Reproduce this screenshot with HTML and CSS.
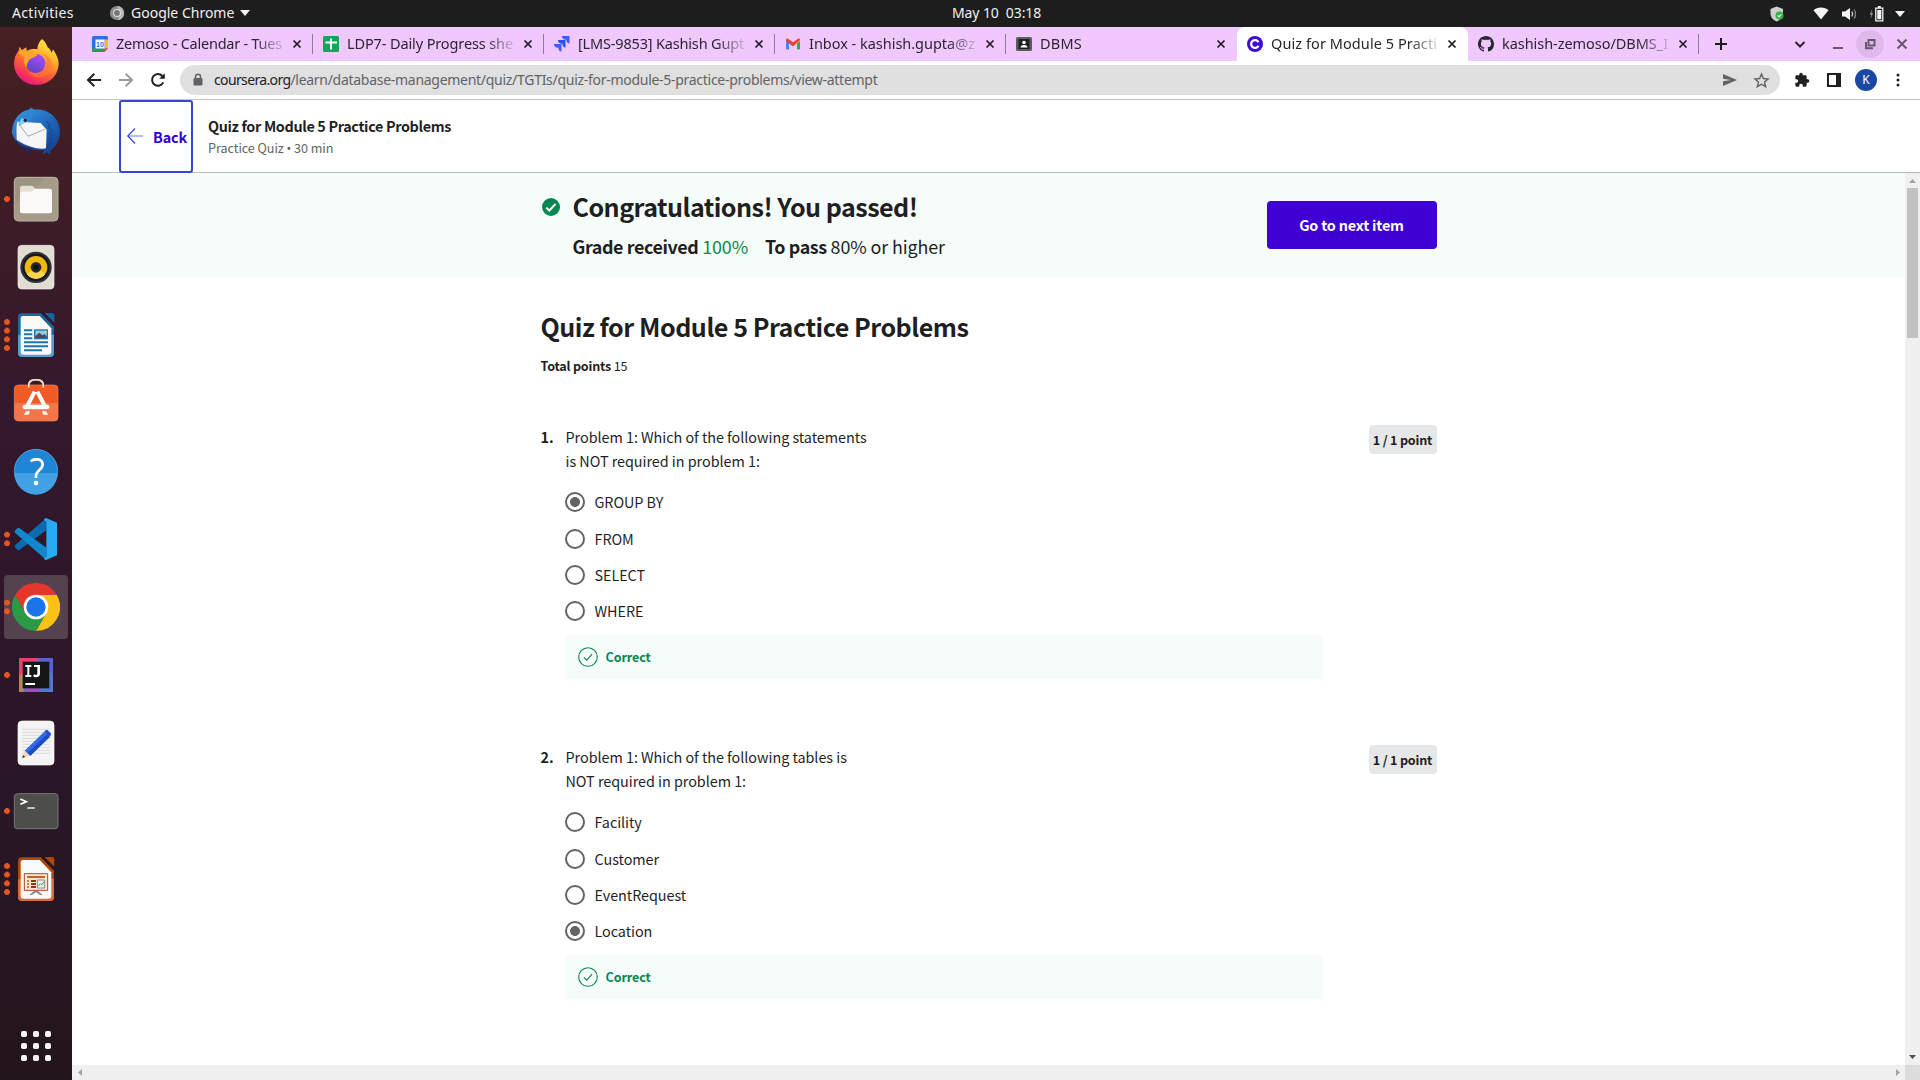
FILE: index.html
```html
<!DOCTYPE html>
<html lang="en">
<head>
<meta charset="utf-8">
<title>Quiz for Module 5 Practice Problems</title>
<link rel="stylesheet" href="styles.css">
</head>
<body>
<div class="desktop">
  <header class="topbar">
    <span class="activities">Activities</span>
    <span class="appmenu">
      <svg class="i18" viewBox="0 0 18 18"><circle cx="9" cy="9" r="8" fill="#8b8b8b"/><path d="M9 1a8 8 0 0 1 8 8c0 4-3 8-7 8l3-8z" fill="#b9b9b9"/><circle cx="9" cy="9" r="4.400" fill="#e4e4e4"/><circle cx="9" cy="9" r="3.300" fill="#777"/></svg>
      <span class="appname">Google Chrome</span>
      <svg class="caret" viewBox="0 0 10 6"><path d="M0 0h10L5 6z" fill="#f2f2f2"/></svg>
    </span>
    <span class="clock">May 10&nbsp; 03:18</span>
    <span class="status">
      <svg class="shield" viewBox="0 0 16 16"><path d="M7.500 0.500L14 3v4.500c0 4-3 6.500-6.500 8C4 14 1.500 11 1.500 7.500V3z" fill="#cfcfcf"/><circle cx="10.500" cy="9.500" r="4" fill="#2fb344"/><path d="M8.600 9.500l1.400 1.400 2.400-2.600" fill="none" stroke="#fff" stroke-width="1.100"/></svg>
      <svg class="wifi" viewBox="0 0 16 13"><path d="M0.500 3.200C2.500 1.300 5 .5 8 .5s5.500.8 7.500 2.700L8 12.500z" fill="#f5f5f5"/></svg>
      <svg class="vol" viewBox="0 0 16 14"><path d="M0 4.500h3L8 1v12L3 9.500H0z" fill="#f5f5f5"/><path d="M9.800 4.500q1.600 2.500 0 5" fill="none" stroke="#ddd" stroke-width="1.300"/><path d="M12 2.500q3 4.500 0 9" fill="none" stroke="#8a8a8a" stroke-width="1.300"/></svg>
      <svg class="bat" viewBox="0 0 15 16"><path d="M3 3.500L.8 8.500h1.700L1.500 13 4 7.200H2.400z" fill="#a8a8a8"/><path d="M6.800 2.200h7v12.600h-7z" fill="none" stroke="#f5f5f5" stroke-width="1.300"/><path d="M8.800 0h3v2h-3zM8.300 4h4v9.300h-4z" fill="#f5f5f5"/></svg>
      <svg class="caret" viewBox="0 0 10 6"><path d="M0 0h10L5 6z" fill="#f2f2f2"/></svg>
    </span>
  </header>

  <div class="workspace">
    <nav class="dock">
      <div class="app"><svg viewBox="0 3 144 144"><defs><linearGradient id="ff" x1=".8" y1="0" x2=".3" y2="1"><stop offset="0" stop-color="#fff14a"/><stop offset=".35" stop-color="#ffb02e"/><stop offset=".65" stop-color="#ff5a36"/><stop offset="1" stop-color="#ec1280"/></linearGradient><linearGradient id="fp" x1=".8" y1="0" x2=".3" y2="1"><stop offset="0" stop-color="#b34bf5"/><stop offset="1" stop-color="#5a45c8"/></linearGradient></defs><path d="M90 3c8 6 14 16 17 25 6 4 9 9 12 16l4-10c12 18 17 32 17 42 0 37-30 65-67 65S6 112 6 76c0-16 6-28 14-38l2-12 8 10 13-8 1 10c14-6 24-8 32-4 0-12 6-24 14-31z" fill="url(#ff)"/><circle cx="71" cy="76" r="29" fill="url(#fp)"/><path d="M20 40c10-4 20-2 29 6 10-4 20-4 27 4-4 8-16 8-23 14-6 8-10 14-8 24-10-8-12-22-6-31-10-2-16-8-19-17z" fill="#ffa42c"/><path d="M44 92c10 18 46 18 58-6 6-12 2-30-10-38 22 4 34 28 24 50-12 26-58 30-72-6z" fill="#ff7a33" opacity=".65"/></svg></div>
      <div class="app"><svg viewBox="0 0 144 144"><defs><linearGradient id="tb" x1="0" y1="0" x2=".8" y2="1"><stop offset="0" stop-color="#3aa0e4"/><stop offset=".6" stop-color="#1d63b8"/><stop offset="1" stop-color="#17408f"/></linearGradient></defs><path d="M56 2l14 6c40-4 74 28 74 66 0 24-12 44-28 56l-2 12-10-6-12 6 4-12C50 128 14 124 0 78 0 40 22 12 50 8z" fill="url(#tb)"/><path d="M16 44l70 4 18 20-2 56c-24 6-70-12-88-26 0-20-2-38 2-54z" fill="#f6f6f8"/><path d="M20 50l28 38 52-22" fill="none" stroke="#a9a9b2" stroke-width="3"/><path d="M22 58C18 26 42 6 70 10 54 22 64 32 50 42c-8 6-18 4-28 16z" fill="#2f86d2"/><path d="M22 58c0-12 2-20 8-25 6 4 12 8 18 10-10 4-18 6-26 15z" fill="#88c9f2"/><circle cx="40" cy="40" r="5" fill="#1b2340"/><path d="M104 42l10 14-4 6 10 8-8 8 10 4-10 12 8 2-12 18 14-4" fill="none" stroke="#123c86" stroke-width="4" opacity=".5"/><path d="M10 96c14 16 34 22 54 28l-6 18C34 136 14 120 10 96z" fill="#2a2358" opacity=".7"/></svg></div>
      <div class="app"><i class="run n1"></i><svg viewBox="0 0 144 144"><rect x="7" y="7" width="131" height="131" rx="12" fill="#9c9480" stroke="#c3bca9" stroke-width="3"/><path d="M8 90L100 8h28q10 0 10 10v108q0 12-12 12H20q-12 0-12-12z" fill="#aba48f" opacity=".5"/><path d="M24 40q0-8 8-8h26q4 0 7 4l5 6v20H24z" fill="#e3dfd2"/><path d="M24 58q0-8 8-8h26l6-5q3-4 8-4h40q8 0 8 8v58q0 8-8 8H32q-8 0-8-8z" fill="#faf9f7"/></svg></div>
      <div class="app"><svg viewBox="0 0 144 144"><rect x="18" y="7" width="108" height="131" rx="11" fill="#e1ddd2" stroke="#f3f1ea" stroke-width="2"/><circle cx="72" cy="73" r="47" fill="#2e3139"/><circle cx="72" cy="73" r="41" fill="#16181d"/><circle cx="72" cy="73" r="34" fill="#efb90e"/><path d="M44 93a34 34 0 0 0 56 0L72 73z" fill="#f8d64f"/><circle cx="72" cy="73" r="16" fill="#26282a"/><circle cx="72" cy="73" r="8" fill="#0f1011"/></svg></div>
      <div class="app"><i class="run n4"></i><svg viewBox="0 0 144 144"><path d="M29 7h57l40 40v79q0 12-12 12H30q-12 0-12-12V18q0-11 11-11z" fill="#176aa5"/><path d="M18 72h108v54q0 12-12 12H30q-12 0-12-12z" fill="#4f9fcf"/><path d="M33 15h50l35 37v71q0 8-8 8H34q-8 0-8-8V23q0-8 7-8z" fill="#fafafa"/><path d="M98 6h22q7 0 7 7v22z" fill="#12679f"/><path d="M36 55h25v6H36zM36 67h25v6H36zM36 79h25v6H36zM36 91h72v6H36zM36 103h72v6H36zM36 115h54v6H36z" fill="#1b74ad"/><path d="M66 55h42v30H66z" fill="#1b74ad"/><path d="M70 59h34v22H70z" fill="#8ccbec"/><path d="M70 81V75l12-10 9 8 6-4 7 7v5z" fill="#4a4c50"/><path d="M96 59h8v8z" fill="#f5cf32"/></svg></div>
      <div class="app"><svg viewBox="0 0 144 144"><path d="M50 30V20q0-18 22-18t22 18v10" fill="none" stroke="#eed9b8" stroke-width="5"/><rect x="7" y="18" width="131" height="108" rx="12" fill="#ee5b25" stroke="#f58d5f" stroke-width="2"/><path d="M8 72h130v42q0 12-12 12H20q-12 0-12-12z" fill="#f2764a"/><path d="M50 26V20q0-18 22-18t22 18v6" fill="none" stroke="#eed9b8" stroke-width="5"/><path d="M68 38L44 84M76 38l24 46" stroke="#fff" stroke-width="12"/><path d="M38 84h68" stroke="#fff" stroke-width="13" stroke-linecap="round"/><path d="M42 97l-6 10h14l4-10zM102 97l6 10H94l-4-10z" fill="#fff"/></svg></div>
      <div class="app"><svg viewBox="0 0 144 144"><circle cx="72" cy="72" r="65" fill="#1f85d6" stroke="#70bdf0" stroke-width="2"/><path d="M7 78a65 65 0 0 0 130 0z" fill="#42a0e4"/><path d="M56 43c8-8 34-10 36 8 1 18-20 18-20 36v6" fill="none" stroke="#fff" stroke-width="8"/><circle cx="72" cy="108" r="7" fill="#fff"/></svg></div>
      <div class="app"><i class="run n2"></i><svg viewBox="0 0 144 144"><path d="M102 10L103 46 23 104q-4 3-7 0l-6-6q-4-4 0-8z" fill="#0a6cae"/><path d="M102 134l1-36L23 40q-4-3-7 0l-6 6q-4 4 0 8z" fill="#1187cf"/><path d="M102 9l33 14v98l-33 14q-4 0-6-4l7-6V20l-7-6q2-4 6-5z" fill="#28aaf4"/></svg></div>
      <div class="app active"><i class="run n2"></i><svg viewBox="0 0 144 144"><path d="M9.600 36A72 72 0 0 1 134.400 36H72z" fill="#e4372c"/><path d="M134.400 36A72 72 0 0 1 72 144l31-54-31-54z" fill="#fbc116"/><path d="M72 144A72 72 0 0 1 9.600 36l31 54L103 90z" fill="#2b9a46"/><path d="M9.600 36l31 54L72 72V36z" fill="#e4372c"/><path d="M72 36h62.400L103 90z" fill="#fbc116"/><circle cx="72" cy="72" r="37" fill="#fff"/><circle cx="72" cy="72" r="29" fill="#1b74e8"/></svg></div>
      <div class="app"><i class="run n1"></i><svg viewBox="0 0 144 144"><path d="M21 21h102v102H21z" fill="#5277d6"/><path d="M21 21h60L40 72l-19 20z" fill="#f23c6e"/><path d="M76 21h47v50z" fill="#5a63cf"/><path d="M21 74l14-10v59H21z" fill="#b58459"/><path d="M40 123V108h50l-10 15z" fill="#9a52b8"/><path d="M32 32h80v80H32z" fill="#161616"/><path d="M40 42h18v6h-6v24h6v6H40v-6h6V48h-6zM66 42h18v25q0 12-12 12-5 0-9-4l4-5q9 5 9-3V48H66zM40 96h29v6H40z" fill="#fff"/></svg></div>
      <div class="app"><svg viewBox="0 0 144 144"><rect x="18" y="6" width="108" height="132" rx="12" fill="#f4f4f4" stroke="#fff" stroke-width="2"/><path d="M30 31h84M30 40h84M30 49h84M30 58h84M30 67h84M30 76h84M30 85h84M30 94h84M30 103h84" stroke="#cfcfcf" stroke-width="2"/><path d="M30 117l8-22 15 15z" fill="#f3d8b8"/><path d="M30 117l4-9 6 6z" fill="#3a3a3a"/><path d="M38 95l58-56 17 15-58 56z" fill="#2f6be4"/><path d="M47 102l58-56 8 8-58 56z" fill="#1d4bc0"/><path d="M96 39l5-5q3-3 6 0l9 9q3 3 0 6l-4 5z" fill="#2450cf"/></svg></div>
      <div class="app"><i class="run n1"></i><svg viewBox="0 0 144 144"><rect x="7" y="20" width="131" height="105" rx="9" fill="#4d4d4c" stroke="#777" stroke-width="3"/><path d="M25 36l18 8-18 8" fill="none" stroke="#fff" stroke-width="5"/><path d="M46 63h22" stroke="#fff" stroke-width="4"/></svg></div>
      <div class="app"><i class="run n4"></i><svg viewBox="0 0 144 144"><path d="M29 7h57l40 40v79q0 12-12 12H30q-12 0-12-12V18q0-11 11-11z" fill="#b1460b"/><path d="M18 72h108v54q0 12-12 12H30q-12 0-12-12z" fill="#dd6a31"/><path d="M33 15h50l35 37v71q0 8-8 8H34q-8 0-8-8V23q0-8 7-8z" fill="#fafafa"/><path d="M98 6h22q7 0 7 7v22z" fill="#ae4509"/><path d="M37 56h70v50H37z" fill="#fbe7d6" stroke="#a74c1c" stroke-width="3"/><path d="M45 63h54v6H45z" fill="#c7602a"/><path d="M45 75h6v6h-6zM45 84h6v6h-6zM45 93h6v6h-6z" fill="#dd7a43"/><path d="M57 75h15v6H57zM57 84h15v6H57zM57 93h15v6H57z" fill="#8e3a10"/><path d="M76 75h22v24H76z" fill="#f2f2f2" stroke="#8c8c8c" stroke-width="3"/><path d="M79 93l6-7 4 4 7-10" fill="none" stroke="#3aa640" stroke-width="3"/><path d="M66 108h12l14 12h-8l-12-8-12 8h-8z" fill="#8a8a8a"/></svg></div>
      <div class="app grid"><svg viewBox="0 0 144 144"><g fill="#f3f3f1"><rect x="27" y="27" width="18" height="18" rx="5"/><rect x="63" y="27" width="18" height="18" rx="5"/><rect x="99" y="27" width="18" height="18" rx="5"/><rect x="27" y="63" width="18" height="18" rx="5"/><rect x="63" y="63" width="18" height="18" rx="5"/><rect x="99" y="63" width="18" height="18" rx="5"/><rect x="27" y="99" width="18" height="18" rx="5"/><rect x="63" y="99" width="18" height="18" rx="5"/><rect x="99" y="99" width="18" height="18" rx="5"/></g></svg></div>
    </nav>

    <div class="browser">
      <div class="tabs">
        <div class="tab"><svg class="i16" viewBox="0 0 16 16"><path d="M0 1.500Q0 0 1.500 0H14.500Q16 0 16 1.500V12.500H12.500V16H1.500Q0 16 0 14.500z" fill="#2f6fe6"/><path d="M12.500 3.500H16v9h-3.500z" fill="#fbbc04"/><path d="M3 12.500h9.500V16H1.500Q0 16 0 14.500V12.500z" fill="#24a148"/><path d="M12.500 12.500H16L12.500 16z" fill="#e94335"/><path d="M3.500 3.500h9v9h-9z" fill="#fff"/><text x="8" y="10.800" class="cal-day">10</text></svg><span class="title t1">Zemoso - Calendar - Tues</span><svg class="x" viewBox="0 0 10 10"><path d="M1.500 1.500l7 7M8.500 1.500l-7 7"/></svg></div>
        <div class="tab"><svg class="i16" viewBox="0 0 16 16"><rect width="16" height="16" rx="1.500" fill="#12a65a"/><path d="M7 2.500h2V5.500h5v2H9V13.500H7V7.500H2.500v-2H7z" fill="#fff"/></svg><span class="title t2">LDP7- Daily Progress she</span><svg class="x" viewBox="0 0 10 10"><path d="M1.500 1.500l7 7M8.500 1.500l-7 7"/></svg></div>
        <div class="tab"><svg class="i16" viewBox="0 0 16 16"><path d="M8 0h7.500v7.500q-3 0-3.200-3.700Q8 3.800 8 0z" fill="#3d5cff"/><path d="M4 4h7.500v7.500q-3 0-3.200-3.700Q4 7.800 4 4z" fill="#2d50e6"/><path d="M0 8h7.500v7.500q-3 0-3.200-3.700Q0 11.800 0 8z" fill="#3d5cff"/></svg><span class="title t3">[LMS-9853] Kashish Gupt</span><svg class="x" viewBox="0 0 10 10"><path d="M1.500 1.500l7 7M8.500 1.500l-7 7"/></svg></div>
        <div class="tab"><svg class="i16" viewBox="0 0 16 16"><path d="M1 4.500l3 2V13.500H2q-1 0-1-1z" fill="#4285f4"/><path d="M12 6.500l3-2v8q0 1-1 1h-2z" fill="#34a853"/><path d="M12 4v3.500l3-2.200V4q0-1.800-1.800-1.300z" fill="#fbbc04"/><path d="M1 5.300V4Q1 2.200 3 2.700L8 6.300l5-3.600q2-.5 2 1.300L8 10.500z" fill="#ea4335"/></svg><span class="title t4">Inbox - kashish.gupta@z</span><svg class="x" viewBox="0 0 10 10"><path d="M1.500 1.500l7 7M8.500 1.500l-7 7"/></svg></div>
        <div class="tab nosep"><svg class="i16" viewBox="0 0 16 16"><rect y="1" width="16" height="14" rx="1.500" fill="#5b5d62"/><path d="M2.500 3h11v10h-11z" fill="#1f2023"/><circle cx="8" cy="6.500" r="1.800" fill="#fff"/><path d="M4.500 11.500q0-2.500 3.500-2.500t3.500 2.500z" fill="#fff"/></svg><span class="title t5">DBMS</span><svg class="x" viewBox="0 0 10 10"><path d="M1.500 1.500l7 7M8.500 1.500l-7 7"/></svg></div>
        <div class="tab current"><svg class="i16" viewBox="0 0 16 16"><circle cx="8" cy="8" r="8" fill="#3c0bd6"/><path d="M11.500 6.200A3.900 3.900 0 1 0 11.500 9.800" fill="none" stroke="#fff" stroke-width="2.300"/></svg><span class="title t6">Quiz for Module 5 Practi</span><svg class="x" viewBox="0 0 10 10"><path d="M1.500 1.500l7 7M8.500 1.500l-7 7"/></svg></div>
        <div class="tab"><svg class="i16" viewBox="0 0 16 16"><path fill="#24292f" d="M8 0C3.580 0 0 3.580 0 8c0 3.540 2.290 6.530 5.470 7.590.4.070.55-.17.55-.38 0-.19-.01-.82-.01-1.490-2.010.37-2.530-.49-2.690-.94-.09-.23-.48-.94-.82-1.130-.28-.15-.68-.52-.01-.53.63-.01 1.080.58 1.230.82.72 1.210 1.870.87 2.330.66.070-.52.280-.87.510-1.070-1.780-.2-3.640-.89-3.640-3.950 0-.87.31-1.590.82-2.150-.08-.2-.36-1.020.080-2.120 0 0 .67-.21 2.200.82.640-.18 1.320-.27 2-.27s1.360.090 2 .27c1.530-1.040 2.200-.82 2.200-.82.44 1.100.16 1.920.080 2.120.51.56.82 1.270.82 2.150 0 3.070-1.870 3.750-3.650 3.950.29.25.54.73.54 1.480 0 1.070-.01 1.930-.01 2.200 0 .21.15.46.55.38A8.010 8.010 0 0 0 16 8c0-4.420-3.580-8-8-8z"/></svg><span class="title t7">kashish-zemoso/DBMS_I</span><svg class="x" viewBox="0 0 10 10"><path d="M1.500 1.500l7 7M8.500 1.500l-7 7"/></svg></div>
        <svg class="newtab" viewBox="0 0 12 12"><path d="M6 0v12M0 6h12"/></svg>
        <div class="winctl">
          <svg class="search" viewBox="0 0 28 28"><path d="M9.500 12l4.500 4.500 4.500-4.500"/></svg>
          <svg viewBox="0 0 28 28"><path d="M9 18h10"/></svg>
          <svg viewBox="0 0 28 28"><circle cx="14" cy="14" r="14" class="hov"/><path d="M12.500 10h6v5.500h-6zM10 12v6.200h7"/></svg>
          <svg viewBox="0 0 28 28"><path d="M9.500 9.500l9 9M18.500 9.500l-9 9"/></svg>
        </div>
      </div>

      <div class="toolbar">
        <svg class="nav" viewBox="0 0 16 16"><path d="M15 8H2.200M8.300 1.700L2 8l6.300 6.300"/></svg>
        <svg class="nav dim" viewBox="0 0 16 16"><path d="M1 8h12.800M7.700 1.700L14 8l-6.300 6.300"/></svg>
        <svg class="nav" viewBox="0 0 16 16"><path d="M13.200 10.300a5.800 5.800 0 1 1-1-6.300l1.300 1.500"/><path d="M14.800 1.200v5.600H9.200z" class="solid"/></svg>
        <div class="omnibox">
          <svg class="lock" viewBox="0 0 10 14"><path d="M2.500 6V3.700a2.500 2.500 0 0 1 5 0V6" fill="none" stroke="#5f6368" stroke-width="1.500"/><rect x=".5" y="5" width="9" height="7.500" rx="1" fill="#5f6368"/></svg>
          <span class="url"><span class="host">coursera.org</span><span class="path">/learn/database-management/quiz/TGTIs/quiz-for-module-5-practice-problems/view-attempt</span></span>
          <svg class="send" viewBox="0 0 14 12"><path d="M0 0l14 6-14 6V7.300L8 6 0 4.700z" fill="#5f6368"/></svg>
          <svg class="star" viewBox="0 0 24 24"><path d="M12 3l2.700 6.200 6.700.6-5.100 4.400 1.600 6.600-5.900-3.500-5.900 3.500 1.600-6.600-5.100-4.400 6.700-.6z" fill="none" stroke="#5f6368" stroke-width="2"/></svg>
        </div>
        <svg class="puzzle" viewBox="0 0 24 24"><path fill="#202124" d="M20.500 11H19V7c0-1.100-.9-2-2-2h-4V3.500C13 2.120 11.880 1 10.500 1S8 2.120 8 3.500V5H4c-1.100 0-1.990.9-1.990 2v3.800H3.500c1.490 0 2.700 1.210 2.700 2.700s-1.210 2.700-2.700 2.700H2V20c0 1.100.9 2 2 2h3.800v-1.500c0-1.490 1.210-2.700 2.700-2.700s2.700 1.210 2.700 2.700V22H17c1.100 0 2-.9 2-2v-4h1.500c1.380 0 2.500-1.120 2.500-2.500S21.880 11 20.500 11z"/></svg>
        <svg class="panel" viewBox="0 0 14 14"><path d="M1 1h12v12H1z" fill="#fff" stroke="#202124" stroke-width="2"/><path d="M9 1h4v12H9z" fill="#202124"/></svg>
        <span class="avatar">K</span>
        <svg class="dots" viewBox="0 0 4 14"><circle cx="2" cy="2" r="1.500"/><circle cx="2" cy="7" r="1.500"/><circle cx="2" cy="12" r="1.500"/></svg>
      </div>

      <div class="pagehead">
        <a class="back"><svg viewBox="0 0 16 16"><path d="M8 .5L.8 8 8 15.500"/><path d="M1 8h15" opacity=".6"/></svg><span>Back</span></a>
        <div class="crumb"><span class="name">Quiz for Module 5 Practice Problems</span><span class="kind">Practice Quiz <span class="bullet">•</span> 30 min</span></div>
      </div>

      <div class="viewport">
        <main class="page">
          <section class="banner">
            <div class="column">
              <svg class="pass" viewBox="0 0 18 18"><circle cx="9" cy="9" r="9" fill="#078751"/><path d="M4.300 9.600l3 2.900 6.200-6.500" fill="none" stroke="#fff" stroke-width="2"/></svg>
              <div class="result">
                <h1>Congratulations! You passed!</h1>
                <p><b>Grade received</b> <span class="green">100%</span><b class="topass">To pass</b> <span>80% or higher</span></p>
              </div>
              <a class="next">Go to next item</a>
            </div>
          </section>
          <section class="quiz">
            <h2>Quiz for Module 5 Practice Problems</h2>
            <p class="total"><b>Total points</b> <span>15</span></p>

            <article class="question">
              <b class="num">1.</b>
              <div class="body">
                <p class="prompt">Problem 1: Which of the following statements is NOT required in problem 1:</p>
                <div class="option"><i class="radio on"></i>GROUP BY</div>
                <div class="option"><i class="radio"></i>FROM</div>
                <div class="option"><i class="radio"></i>SELECT</div>
                <div class="option"><i class="radio"></i>WHERE</div>
                <div class="feedback"><svg viewBox="0 0 20 20"><circle cx="10" cy="10" r="9.300"/><path d="M6 10.500l2.800 2.600 5.200-6"/></svg><span>Correct</span></div>
              </div>
              <span class="points">1 / 1 point</span>
            </article>

            <article class="question">
              <b class="num">2.</b>
              <div class="body">
                <p class="prompt">Problem 1: Which of the following tables is NOT required in problem 1:</p>
                <div class="option"><i class="radio"></i>Facility</div>
                <div class="option"><i class="radio"></i>Customer</div>
                <div class="option"><i class="radio"></i>EventRequest</div>
                <div class="option"><i class="radio on"></i>Location</div>
                <div class="feedback"><svg viewBox="0 0 20 20"><circle cx="10" cy="10" r="9.300"/><path d="M6 10.500l2.800 2.600 5.200-6"/></svg><span>Correct</span></div>
              </div>
              <span class="points">1 / 1 point</span>
            </article>
          </section>
        </main>
        <div class="vscroll"><svg viewBox="0 0 7 4"><path d="M0 4h7L3.500 0z"/></svg><i class="thumb"></i><svg class="end" viewBox="0 0 7 4"><path d="M0 0h7L3.500 4z"/></svg></div>
        <div class="hscroll"><svg viewBox="0 0 4 7"><path d="M4 0v7L0 3.500z"/></svg><svg viewBox="0 0 4 7"><path d="M0 0v7l4-3.500z"/></svg></div>
        <div class="corner"></div>
      </div>
    </div>
  </div>
</div>
</body>
</html>
```
FILE: styles.css
```css
* { box-sizing: border-box; }
body {
  margin: 0;
  overflow: hidden;
  font-family: "Noto Sans CJK SC", "Noto Sans", sans-serif;
  color: #1f1f1f;
}
svg { display: block; flex: none; }
p, h1, h2 { margin: 0; }
i { font-style: normal; }

.desktop { width: 1920px; height: 1080px; display: flex; flex-direction: column; }

/* system bar */
.topbar {
  height: 27px; flex: none;
  display: grid; grid-template-columns: 109px 843px auto 1fr;
  align-items: center;
  background: #1d1d1d; color: #f0f0f0;
  font: 14px/25px "Noto Sans", sans-serif;
}
.activities { padding-left: 12px; letter-spacing: 0.350px; }
.appmenu, .clock, .activities { padding-bottom: 2px; }
.clock { letter-spacing: -0.100px; }
.appmenu { display: flex; align-items: center; }
.i18 { width: 16px; height: 16px; margin-right: 6px; }
.caret { width: 10px; height: 6px; margin-left: 6px; }
.status { display: flex; align-items: center; justify-content: flex-end; padding-right: 15px; }
.shield { width: 16px; height: 16px; margin-right: 28px; }
.wifi { width: 16px; height: 13px; margin-right: 13px; }
.vol { width: 16px; height: 14px; margin-right: 11px; }
.bat { width: 15px; height: 16px; margin-right: 5px; }

.workspace { flex: 1; display: flex; min-height: 0; }

/* dock */
.dock {
  width: 72px; flex: none;
  display: flex; flex-direction: column; align-items: center; gap: 4px;
  padding: 4px 0 2px;
  background: linear-gradient(#462022, #34182c 36%, #2b1629 65%, #23151d);
}
.app { width: 64px; height: 64px; flex: none; display: flex; align-items: center; justify-content: center; position: relative; border-radius: 4px; }
.app svg { width: 48px; height: 48px; }
.app.active { background: #54434f; }
.app.grid { margin-top: auto; }
.run {
  position: absolute; left: 0; top: 50%; width: 6px; transform: translateY(-50%);
  background: radial-gradient(circle at 3px 3px, #e95420 2.600px, transparent 3.200px) 0 0 / 6px 8.700px repeat-y;
}
.n1 { height: 6px; }
.n2 { height: 14.700px; }
.n4 { height: 32px; }

/* browser chrome */
.browser { flex: 1; min-width: 0; display: flex; flex-direction: column; background: #fff; }
.tabs { height: 34px; flex: none; display: flex; align-items: center; padding-left: 10px; background: #f0c8fe; }
.tab {
  width: 231px; height: 34px; flex: none;
  display: flex; align-items: center; padding: 0 11px 0 10px;
  position: relative;
  font: 14.500px/32px "Noto Sans", sans-serif; color: #2c2530;
}
.tab::after { content: ""; position: absolute; right: 0; top: 7px; width: 1px; height: 20px; background: #8d7a98; }
.tab.nosep::after, .tab.current::after { display: none; }
.tab.current { background: #fff; border-radius: 8px 8px 0 0; }
.i16 { width: 16px; height: 16px; }
.cal-day { font: bold 7px "Liberation Sans", sans-serif; fill: #2f6fe6; text-anchor: middle; }
.title {
  width: 168px; margin-left: 8px; padding-bottom: 2px; overflow: hidden; white-space: nowrap;
  -webkit-mask-image: linear-gradient(90deg, #000 138px, transparent 172px);
  mask-image: linear-gradient(90deg, #000 138px, transparent 172px);
}
.t1 { letter-spacing: -0.232px; }
.t2 { letter-spacing: -0.118px; }
.t3 { letter-spacing: -0.173px; }
.t4 { letter-spacing: -0.022px; }
.t5 { letter-spacing: 0.219px; }
.t6 { letter-spacing: 0.074px; }
.t7 { letter-spacing: -0.048px; }
.x { width: 10px; height: 10px; margin-left: 8px; stroke: #1f1a22; stroke-width: 1.700; }
.newtab { width: 12px; height: 12px; margin-left: 16px; stroke: #1c1c1c; stroke-width: 2; }
.winctl { margin-left: auto; display: flex; padding-right: 4px; gap: 4px; }
.winctl svg { width: 28px; height: 28px; fill: none; stroke: #66586d; stroke-width: 2; }
.winctl .search { margin-right: 6px; stroke: #2c2530; }
.winctl .hov { fill: #dfb9ec; stroke: none; }

.toolbar { height: 39px; flex: none; display: flex; align-items: center; padding-left: 14px; border-bottom: 1px solid #c8c8c8; }
.nav { width: 16px; height: 16px; margin-right: 16px; fill: none; stroke: #202124; stroke-width: 2; }
.dim { stroke: #9b9b9b; }
.nav .solid { fill: #202124; stroke: none; }
.omnibox { width: 1600px; height: 30px; margin-left: -2px; border-radius: 15px; background: #e0e0e0; display: flex; align-items: center; padding: 0 10px 0 13px; }
.lock { width: 10px; height: 14px; }
.url { margin-left: 11px; flex: 1; white-space: nowrap; font: 14px/30px "Noto Sans", sans-serif; color: #5f6368; }
.host { color: #202124; letter-spacing: -0.640px; }
.path { letter-spacing: -0.283px; }
.send { width: 14px; height: 12px; }
.star { width: 17px; height: 17px; margin-left: 16px; }
.puzzle { width: 16px; height: 16px; margin-left: 14px; }
.panel { width: 14px; height: 14px; margin-left: 17px; }
.avatar { width: 22px; height: 22px; margin-left: 14px; border-radius: 50%; background: #1a47a3; color: #fff; text-align: center; font: 12px/22px "Noto Sans", sans-serif; }
.dots { width: 4px; height: 14px; margin-left: 19px; fill: #202124; }

/* course header */
.pagehead { height: 73px; flex: none; display: flex; padding-left: 47px; border-bottom: 1px solid #bcbcbc; }
.back {
  width: 74px; height: 73px; display: flex; align-items: center; padding: 0 0 1px 6px; gap: 10px;
  border: 2px solid #3545d8; border-radius: 3px; color: #3000cf; font-size: 14.400px; font-weight: 700; letter-spacing: -0.150px;
}
.back svg { width: 16px; height: 16px; fill: none; stroke: #3545d8; stroke-width: 1.200; }
.crumb { display: flex; flex-direction: column; justify-content: center; margin-left: 15px; }
.name { font-size: 14.400px; line-height: 24px; font-weight: 600; letter-spacing: -0.344px; }
.kind { font-size: 12.600px; line-height: 20px; color: #636363; letter-spacing: -0.050px; }
.bullet { font-family: "Noto Sans", sans-serif; line-height: 1; }

/* page */
.viewport { flex: 1; min-height: 0; display: grid; grid-template-columns: 1fr 15px; grid-template-rows: 1fr 15px; }
.page { overflow: hidden; }
.banner { height: 104px; background: #f5fcfa; }
.column { width: 896px; height: 104px; margin: 0 auto; display: flex; align-items: center; }
.pass { width: 18px; height: 18px; margin: 0 13px 36px 1px; }
.result { flex: 1; padding-bottom: 2px; }
h1, h2 { font-size: 25.100px; line-height: 32px; font-weight: 600; }
h1 { letter-spacing: -0.534px; }
h2 { letter-spacing: -0.478px; }
.result p { margin-top: 12px; font-size: 17.900px; line-height: 24px; letter-spacing: -0.120px; }
.result b { font-weight: 600; letter-spacing: -0.400px; }
.green { color: #078751; }
.result .topass { margin-left: 17px; }
.next { width: 170px; height: 48px; border-radius: 4px; background: #3f00d4; color: #fff; font-size: 14.400px; font-weight: 700; line-height: 48px; letter-spacing: -0.190px; text-align: center; }
.quiz { width: 896px; margin: 0 auto; padding-top: 33px; }
.total { margin-top: 14px; font-size: 12.600px; line-height: 20px; letter-spacing: -0.200px; }
.question { display: grid; grid-template-columns: 25px 756px 1fr; align-items: start; margin-top: 49px; font-size: 14.400px; line-height: 24px; letter-spacing: -0.040px; }
.question + .question { margin-top: 66px; }
.prompt { width: 308px; margin-bottom: 11px; }
.option { height: 36px; display: flex; align-items: center; letter-spacing: -0.060px; }
.prompt + .option { margin-bottom: 1px; }
.radio { width: 20px; height: 20px; margin: 0 10px 0 -1px; border: 2px solid #636363; border-radius: 50%; }
.radio.on { background: radial-gradient(circle, #636363 4.600px, transparent 5.300px); }
.feedback { height: 44px; margin-top: 6px; padding-left: 12px; display: flex; align-items: center; gap: 8px; background: #f5fcfa; color: #078751; font-size: 12.600px; font-weight: 700; letter-spacing: -0.130px; }
.feedback svg { width: 20px; height: 20px; fill: none; stroke: #078751; stroke-width: 1.100; }
.points { justify-self: end; width: 68px; height: 29px; border-radius: 4px; background: #e5e7e8; font-size: 12.600px; font-weight: 600; line-height: 29px; letter-spacing: -0.200px; text-align: center; }

/* scrollbars */
.vscroll { background: #f0f0f0; display: flex; flex-direction: column; align-items: center; padding: 6px 0; }
.vscroll svg { width: 7px; height: 4px; fill: #a3a3a3; }
.vscroll .end { margin-top: auto; fill: #505050; }
.thumb { width: 11px; height: 150px; margin-top: 5px; background: #c1c1c1; }
.hscroll { background: #f0f0f0; display: flex; align-items: center; justify-content: space-between; padding: 0 5px 0 6px; }
.hscroll svg { width: 4px; height: 7px; fill: #a3a3a3; }
.corner { background: #dcdcdc; }
```
